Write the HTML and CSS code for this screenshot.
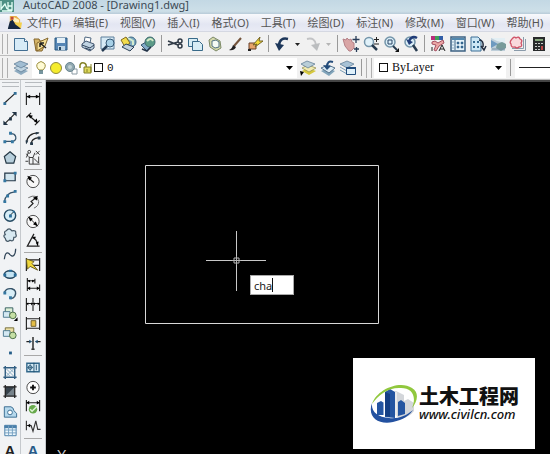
FILE: index.html
```html
<!DOCTYPE html>
<html lang="zh-CN">
<head>
<meta charset="utf-8">
<title>AutoCAD 2008 - [Drawing1.dwg]</title>
<link rel="stylesheet" href="styles.css">
</head>
<body>
<header class="titlebar">
  <svg class="app-icon" viewBox="0 0 14 14"><path d="M0 0h14v12H0z" fill="#4d9084"/><path d="M1 1v9M1 9l4-5 2 5M8 2v8h4V2M8 6h4M2 11h10" fill="none" stroke="#e4fff6" stroke-width="1.300"/></svg>
  <h1>AutoCAD 2008 - [Drawing1.dwg]</h1>
</header>
<nav class="menubar">
  <svg class="doc-icon" viewBox="0 0 16 16"><path d="M3 1h7l4 4v5H3z" fill="#e9b04a"/><path d="M7 2l6 3v5L6 6z" fill="#fff0bd"/><path d="M5 8h11l-1 6H3z" fill="#f4d04e"/><path d="M1 14l2-7 3-2 3 5 4 3 2 2H1z" fill="#172842"/><path d="M4 2h3v3H4z" fill="#c44938"/></svg>
  <a href="#file">文件(F)</a><a href="#edit">编辑(E)</a><a href="#view">视图(V)</a><a href="#insert">插入(I)</a><a href="#format">格式(O)</a><a href="#tools">工具(T)</a><a href="#draw">绘图(D)</a><a href="#dim">标注(N)</a><a href="#modify">修改(M)</a><a href="#window">窗口(W)</a><a href="#help">帮助(H)</a>
</nav>
<div class="toolbar standard">
  <i class="grip"></i>
  <button aria-label="新建"><svg viewBox="0 0 18 18"><path d="M2.500 3.500h10l3 3v9h-13z" fill="#d7ebf7" stroke="#426e92"/><path d="M12.500 3.500v3h3" fill="#fff" stroke="#426e92"/></svg></button>
  <button aria-label="打开"><svg viewBox="0 0 18 18"><path d="M2 4h5l1 2h5v3l-3 7H4z" fill="#d6b567" stroke="#83652d"/><path d="M5 8l11-5-3 8-8 5z" fill="#f5df96" stroke="#83652d"/><path d="M8 8l6 5M8 8v4M8 8h4" stroke="#222" stroke-width="1.500" fill="none"/></svg></button>
  <button aria-label="保存"><svg viewBox="0 0 18 18"><path d="M3 3h12v12H3z" fill="#5686b5" stroke="#285880"/><path d="M5 3h8v5H5z" fill="#e4f0f7"/><path d="M6 11h7v4H6z" fill="#bfd5e5"/><path d="M7 12h2v3H7z" fill="#254662"/></svg></button>
  <i class="sep"></i>
  <button aria-label="打印"><svg viewBox="0 0 18 18"><path d="M5 8l1-6 6 1-1 5" fill="#fff" stroke="#506882"/><path d="M3 9l4-3 8 3v4l-4 3-8-4z" fill="#c0d3e2" stroke="#435771"/><path d="M3 10l8 3 4-3M6 13l6 2" fill="none" stroke="#30435b"/></svg></button>
  <button aria-label="打印预览"><svg viewBox="0 0 18 18"><path d="M2 2h13v12H2z" fill="#d6eaf5" stroke="#5d7f9b"/><path d="M9 10l-6 6" stroke="#243b53" stroke-width="2.500"/><circle cx="11" cy="8" r="4" fill="#a7d0e6" stroke="#335673"/></svg></button>
  <button aria-label="发布"><svg viewBox="0 0 18 18"><circle cx="12" cy="7" r="5" fill="#7da9c1" stroke="#3c6983"/><path d="M9 3l5 3v4" fill="none" stroke="#d5edce" stroke-width="2"/><path d="M2 5l5-3 4 6-5 4z" fill="#f2dc4c" stroke="#826b20"/><path d="M3 12l4-3 8 3-4 4z" fill="#c1d1de" stroke="#2c4258"/></svg></button>
  <button aria-label="三维输出"><svg viewBox="0 0 18 18"><path d="M2 10l5-3 5 4-4 5z" fill="#81a9c7" stroke="#36536c"/><circle cx="11" cy="7" r="5" fill="#5c9b87" stroke="#3f6b70"/><path d="M8 6q4-4 6 0" stroke="#d6ebc8" stroke-width="2" fill="none"/><path d="M3 14l5 2 4-4" stroke="#223246" stroke-width="1.500" fill="none"/></svg></button>
  <i class="sep"></i>
  <button aria-label="剪切"><svg viewBox="0 0 18 18"><path d="M2 6l10 4M2 10l10-3" stroke="#303a46" stroke-width="1.500"/><circle cx="14" cy="6" r="2" fill="none" stroke="#303a46" stroke-width="1.500"/><circle cx="14" cy="11" r="2" fill="none" stroke="#303a46" stroke-width="1.500"/></svg></button>
  <button aria-label="复制"><svg viewBox="0 0 18 18"><path d="M2.500 3.500h9v8h-9z" fill="#d7edf5" stroke="#386a89"/><path d="M6.500 6.500h7l3 3v6h-10z" fill="#d7edf5" stroke="#386a89"/></svg></button>
  <button aria-label="粘贴"><svg viewBox="0 0 18 18"><path d="M3 5l4-3 7 4 1 7-5 3-6-4z" fill="#d4d8aa" stroke="#7d8a68"/><path d="M6 6l4-1 3 2v5l-4 1-3-2z" fill="#f5fbf5" stroke="#547383"/></svg></button>
  <button aria-label="特性匹配"><svg viewBox="0 0 18 18"><path d="M15 3l-7 8" stroke="#74543c" stroke-width="2"/><path d="M3 15q3-1 4-5l3 2q-2 4-7 3" fill="#211f20"/></svg></button>
  <button aria-label="块编辑器"><svg viewBox="0 0 18 18"><path d="M3 8h7v6H3z" fill="#e7a36b" stroke="#69402d"/><path d="M7 10l7-8-1 4h4l-8 6 2-3z" fill="#f4dc37" stroke="#756527"/><path d="M2 14h3v2H2z" fill="#222"/></svg></button>
  <i class="sep"></i>
  <button aria-label="放弃"><svg viewBox="0 0 18 18"><path d="M15 4Q7 2 6 10" fill="none" stroke="#1d375a" stroke-width="2.500"/><path d="M2 8l9 2-5 6z" fill="#1d375a"/></svg></button>
  <button class="drop" aria-label="放弃列表"><svg viewBox="0 0 9 18"><path d="M2 8h5l-2.500 3z" fill="#222"/></svg></button>
  <button aria-label="重做"><svg viewBox="0 0 18 18"><path d="M3 4Q11 2 12 10" fill="none" stroke="#c2c3c5" stroke-width="2"/><path d="M7 10l9-2-3 8z" fill="#bbbdbf"/></svg></button>
  <button class="drop" aria-label="重做列表"><svg viewBox="0 0 9 18"><path d="M2 8h5l-2.500 3z" fill="#b5b5b5"/></svg></button>
  <i class="sep"></i>
  <button aria-label="平移"><svg viewBox="0 0 18 18"><path d="M1 4l3 1 1-2 2 2 2-1 1 3 2 1v5l-3 3H7L3 11z" fill="#d9a5a5" stroke="#b58086"/><path d="M14 1v7M10.500 4.500h7M12 14h5M14.500 12v5" stroke="#283c57" stroke-width="1.300"/></svg></button>
  <button aria-label="实时缩放"><svg viewBox="0 0 18 18"><circle cx="7" cy="7" r="4.500" fill="#e1f2fa" stroke="#7495aa" stroke-width="1.500"/><path d="M10 10l5 5" stroke="#283c50" stroke-width="2.500"/><path d="M14.500 2v5M12 4.500h5M12 9h5" stroke="#222"/></svg></button>
  <button aria-label="窗口缩放"><svg viewBox="0 0 18 18"><circle cx="8" cy="7" r="5" fill="#dceff8" stroke="#7495aa" stroke-width="1.500"/><path d="M6 5h4v4H6z" fill="none" stroke="#284567"/><path d="M11 11l4 4" stroke="#283c50" stroke-width="2"/><path d="M17 13v4h-4z" fill="#111"/></svg></button>
  <button aria-label="缩放上一个"><svg viewBox="0 0 18 18"><circle cx="8" cy="7" r="5" fill="#dceff8" stroke="#7495aa" stroke-width="1.500"/><path d="M11 10l4 6" stroke="#283c50" stroke-width="2.500"/><path d="M15 3Q10 0 7 6" stroke="#213d78" stroke-width="2.500" fill="none"/><path d="M4 4l7 3-4 3z" fill="#213d78"/></svg></button>
  <i class="sep"></i>
  <button aria-label="特性"><svg viewBox="0 0 18 18"><path d="M2 1h4v4H2z" fill="#b92b7b"/><path d="M6 1h4v4H6z" fill="#3e9f58"/><path d="M10 1h4v4h-4z" fill="#315ea7"/><path d="M3 7l3-1 3 2 5-3 1 3-5 3-3 5-2-1 2-5-4-1z" fill="#eca6a4" stroke="#a45062"/><path d="M10 16l3-6 3 6M11 14h4M3 12v4" stroke="#222" fill="none"/></svg></button>
  <button aria-label="设计中心"><svg viewBox="0 0 18 18"><path d="M2 2h14v14H2z" fill="#e5f3fa" stroke="#3d6283" stroke-width="1.500"/><path d="M3 4h12" stroke="#5389af" stroke-width="2"/><path d="M6 5v10" stroke="#3d6283"/><path d="M8 7h2v2H8zM12 7h2v2h-2zM8 11h2v2H8zM12 11h2v2h-2zM3 7h2M3 10h2M3 13h2" fill="#35678f" stroke="#35678f" stroke-width=".5"/></svg></button>
  <button aria-label="工具选项板"><svg viewBox="0 0 18 18"><path d="M2 2h7l3 3v11H2z" fill="#cce7f5" stroke="#3d6f96"/><path d="M4 6h2v2H4zM8 6h2v2H8zM4 11h2v2H4zM8 11h2v2H8z" fill="#356b91"/><path d="M10 5q5 0 4 7M12 11l3 4 2-4" fill="none" stroke="#212c3e" stroke-width="1.500"/></svg></button>
  <button aria-label="图纸集"><svg viewBox="0 0 18 18"><path d="M2 3h14v13H2z" fill="#bfcfda"/><path d="M2 3h14v5L8 6z" fill="#e3eff4"/><path d="M2 5l7 4-7 4z" fill="#6e9ac0"/><path d="M8 9l5-2 4 2v4l-5 3-5-3z" fill="#789b9a"/><path d="M3 14h13" stroke="#7890a2"/></svg></button>
  <button aria-label="标记集"><svg viewBox="0 0 18 18"><path d="M5 15.500h11.500V4M3 13.500h11.500V2" stroke="#8a9baa" fill="none"/><path d="M3 4q2-3 4-1 3-2 4 1 3 1 1 4 2 4-2 4-2 2-4 0-4 1-4-3-2-2 1-5z" fill="#f9d9dc" stroke="#cf5367" stroke-width="1.300"/></svg></button>
  <button aria-label="计算器"><svg viewBox="0 0 18 18"><path d="M4 2h12v14H4z" fill="#282a2b"/><path d="M6 4h8v2H6z" fill="#88a87e"/><path d="M6 8h2v1H6zM9 8h2v1H9zM12 8h2v1h-2zM6 11h2v1H6zM9 11h2v1H9zM6 14h2v1H6zM9 14h2v1H9z" fill="#c8cbcb"/><path d="M12 11h2v4h-2z" fill="#b84544"/></svg></button>
</div>
<div class="toolbar layers">
  <i class="grip"></i>
  <button aria-label="图层特性"><svg viewBox="0 0 18 18"><path d="M2 12l6-3 8 3-7 4z" fill="#8eabc0"/><path d="M2 9l6-3 8 3-7 4z" fill="#c0d4e1" stroke="#57758f" stroke-width=".7"/><path d="M2 5l6-3 8 3-7 4z" fill="#a1bdd2" stroke="#57758f" stroke-width=".7"/></svg></button>
  <button class="combo layer-combo" aria-label="图层 0">
    <svg viewBox="0 0 14 14"><path d="M5 9Q1 5 4 2q3-3 6 0 3 3-1 7z" fill="#fffbd4" stroke="#9d9040"/><path d="M5 10h4M5 12h4" stroke="#4b7380" stroke-width="1.500"/></svg>
    <svg viewBox="0 0 14 14"><circle cx="7" cy="7" r="5.500" fill="#f5ec2d" stroke="#8f8a3d"/></svg>
    <svg viewBox="0 0 14 14"><path d="M8 8h5v5H8z" fill="#fff" stroke="#8b9aa3"/><circle cx="6" cy="6" r="4.500" fill="#91a8b0" stroke="#688591"/><circle cx="6" cy="6" r="2" fill="#bfd0d4"/></svg>
    <svg viewBox="0 0 14 14"><path d="M1 7V4q1-3 4-2 3 1 2 5" fill="none" stroke="#85832a" stroke-width="1.500"/><path d="M5 6h7v6H5z" fill="#ded95b" stroke="#7f7c2b"/><path d="M12 3v8M8 8v3" stroke="#878326"/></svg>
    <b class="swatch"></b><span>0</span>
    <svg class="caret-down" viewBox="0 0 7 4"><path d="M0 0h7L3.500 4z"/></svg>
  </button>
  <button aria-label="将对象的图层置为当前"><svg viewBox="0 0 18 18"><path d="M3 12l6-3 8 3-7 4z" fill="#d6c83e"/><path d="M3 9l6-3 8 3-7 4z" fill="#f3ebb2" stroke="#8d8b45" stroke-width=".7"/><path d="M2 5l6-3 8 3-7 4z" fill="#b9ced8" stroke="#57758f" stroke-width=".7"/><path d="M1 12l4 1-3 4z"/></svg></button>
  <button aria-label="上一个图层"><svg viewBox="0 0 18 18"><path d="M2 12l7-3 7 3-6 5z" fill="#82a5bb"/><path d="M2 9l7-3 7 3-6 5z" fill="#dcebf4" stroke="#57758f"/><path d="M14 3Q8 1 8 8" fill="none" stroke="#244c7a" stroke-width="2"/><path d="M4 6l8 1-4 4z" fill="#244c7a"/></svg></button>
  <button aria-label="图层状态"><svg viewBox="0 0 18 18"><path d="M1 5l7-3 7 3-7 4z" fill="#a7c2d6" stroke="#57758f" stroke-width=".7"/><path d="M1 8l7 4 3-1M1 11l7 4" fill="none" stroke="#7c9fb8"/><path d="M7.500 8.500h9v7h-9z" fill="#dff0fa" stroke="#214c7c"/><path d="M7 9h10" stroke="#214c7c" stroke-width="2"/></svg></button>
  <i class="sep"></i><i class="grip inner"></i>
  <button class="combo color-combo" aria-label="颜色 ByLayer"><b class="swatch"></b><span>ByLayer</span><svg class="caret-down" viewBox="0 0 7 4"><path d="M0 0h7L3.500 4z"/></svg></button>
  <i class="sep"></i>
  <button class="combo line-combo" aria-label="线型"><b class="line"></b></button>
</div>
<main class="workspace">
  <aside class="tools draw-tools">
    <i class="hgrip"></i>
    <div class="stack">
      <button aria-label="直线"><svg viewBox="0 0 18 18"><path d="M3 14L15 3" stroke="#222" stroke-width="1.200"/><path d="M2 13h3v3H2zM13 2h3v3h-3z" fill="#347199"/></svg></button>
      <button aria-label="构造线"><svg viewBox="0 0 18 18"><path d="M3 15L15 3" stroke="#222" stroke-width="1.200"/><path d="M2 16v-5l5 5zM16 2v5l-5-5zM8 8h3v3H8z" fill="#223445"/></svg></button>
      <button aria-label="多段线"><svg viewBox="0 0 18 18"><path d="M3 13h9q4-1 3-5-1-3-5-3" fill="none" stroke="#37546c" stroke-width="1.300"/><path d="M2 12h3v3H2zM10 12h3v3h-3zM8 3h3v3H8z" fill="#3477a1"/></svg></button>
      <button aria-label="正多边形"><svg viewBox="0 0 18 18"><path d="M9 3l6 5-2 7H5L3 8z" fill="#b7cfdc" stroke="#253845" stroke-width="1.300"/></svg></button>
      <button aria-label="矩形"><svg viewBox="0 0 18 18"><path d="M3.500 5.500h11v8h-11z" fill="#d2e5ee" stroke="#233748" stroke-width="1.300"/><path d="M2 12h3v3H2zM13 4h3v3h-3z" fill="#3477a1"/></svg></button>
      <button aria-label="圆弧"><svg viewBox="0 0 18 18"><path d="M3 15Q4 5 14 4" fill="none" stroke="#36536a" stroke-width="1.300"/><path d="M2 13h3v3H2zM5 7h3v3H5zM13 2h3v3h-3z" fill="#3477a1"/></svg></button>
      <button aria-label="圆"><svg viewBox="0 0 18 18"><circle cx="9" cy="9" r="6" fill="#d6edf7" stroke="#244a63" stroke-width="1.500"/><path d="M9 9l4-4" stroke="#222"/><path d="M8 8h3v3H8zM12 4h2v2h-2z" fill="#2d719d"/></svg></button>
      <button aria-label="修订云线"><svg viewBox="0 0 18 18"><path d="M5 4q3-4 6 0 5-1 4 3 2 4-2 4 0 5-4 3-4 3-5-2-3-3 0-4-2-3 1-4z" fill="#d8e9f1" stroke="#455866" stroke-width="1.300"/></svg></button>
      <button aria-label="样条曲线"><svg viewBox="0 0 18 18"><path d="M3 14q1-9 5-6 3 4 5 2 2-2 2-7" fill="none" stroke="#304558" stroke-width="1.300"/></svg></button>
      <button aria-label="椭圆"><svg viewBox="0 0 18 18"><ellipse cx="9" cy="9" rx="6" ry="4" fill="#c5e4f3" stroke="#24465e" stroke-width="1.500"/><path d="M2 8h3v3H2zM8 4h3v2H8zM13 8h3v3h-3z" fill="#286b98"/></svg></button>
      <button aria-label="椭圆弧"><svg viewBox="0 0 18 18"><path d="M3 8q2-5 8-4 6 2 3 8-2 3-5 2" fill="#d9eef7" stroke="#365369" stroke-width="1.500"/><path d="M2 7h3v3H2zM8 12h3v3H8z" fill="#3477a1"/></svg></button>
      <button aria-label="插入块"><svg viewBox="0 0 18 18"><path d="M4 3h8v7H4z" fill="#dcefd6" stroke="#355f60"/><path d="M2 7h7v6H2z" fill="#d5e9f3" stroke="#4c788f"/><circle cx="12" cy="11" r="3.500" fill="#c5dfa4" stroke="#476a43"/><path d="M17 13v4h-4z"/></svg></button>
      <button aria-label="创建块"><svg viewBox="0 0 18 18"><path d="M4 3h9v7H4z" fill="#ebdfa3" stroke="#746b37"/><path d="M2 6h7v6H2z" fill="#d5e9f3" stroke="#4c788f"/><circle cx="12" cy="11" r="3.500" fill="#c5dfa4" stroke="#476a43"/></svg></button>
      <button aria-label="点"><svg viewBox="0 0 18 18"><path d="M8 8h3v3H8z" fill="#245d88"/></svg></button>
      <button aria-label="图案填充"><svg viewBox="0 0 18 18"><path d="M4 2v14M14 2v14M2 4h14M2 14h14" stroke="#315e82" stroke-width="1.500"/><path d="M5 5l8 8M9 5l4 4M5 9l4 4M13 5l-8 8" stroke="#87abc4"/></svg></button>
      <button aria-label="渐变色"><svg viewBox="0 0 18 18"><path d="M4 4h10v10H4z" fill="#77838b"/><path d="M4 4h10L4 14z" fill="#37434c"/><path d="M4 2v14M14 2v14M2 4h14M2 14h14" stroke="#222" stroke-width="1.300"/></svg></button>
      <button aria-label="面域"><svg viewBox="0 0 18 18"><path d="M3 15V4h7q3 1 3 4l3 3v4z" fill="#b5d8ec" stroke="#376a8f"/><circle cx="9" cy="10" r="2.500" fill="#fff" stroke="#376a8f"/></svg></button>
      <button aria-label="表格"><svg viewBox="0 0 18 18"><path d="M3.500 3.500h12v11h-12z" fill="#edf8fd" stroke="#4a7fa9"/><path d="M3 5h13" stroke="#4a7fa9" stroke-width="3"/><path d="M7.500 4v11M11.500 4v11M3 8.500h13M3 11.500h13" stroke="#76a0c1"/></svg></button>
      <button aria-label="多行文字"><span class="letter">A</span></button>
    </div>
  </aside>
  <aside class="tools dim-tools">
    <i class="hgrip"></i>
    <div class="stack">
      <button aria-label="线性标注"><svg viewBox="0 0 18 18"><path d="M2 3v13M16 3v13M2 7h14" stroke="#222" stroke-width="1.200"/><path d="M2 7l4-2v4zM16 7l-4-2v4z"/></svg></button>
      <button aria-label="对齐标注"><svg viewBox="0 0 18 18"><path d="M2 8l5-5M11 16l5-5M5 6l8 7" stroke="#222" stroke-width="1.300"/><path d="M4 5l5 1-3 3zM14 14l-1-5-3 3z"/></svg></button>
      <button aria-label="弧长标注"><svg viewBox="0 0 18 18"><path d="M2 14Q3 3 15 3M7 15q0-6 8-7" fill="none" stroke="#222" stroke-width="1.300"/><path d="M2 15l-1-4h3zM16 3l-4-1v3zM6 13h3v3H6zM14 7h3v3h-3z" fill="#283c4c"/></svg></button>
      <button aria-label="坐标标注"><svg viewBox="0 0 18 18"><path d="M5 8v8h11M5 9h4l2-5M9 9v7M10 10l5 5V8M2 5l2 3M4 4L2 9M12 2l4 4M16 2l-4 4M1 13h3" fill="none" stroke="#333"/><circle cx="5" cy="3" r="1.500" fill="none" stroke="#333"/></svg></button>
      <i></i>
      <button aria-label="半径标注"><svg viewBox="0 0 18 18"><circle cx="9" cy="9" r="6.500" fill="#f8f8f8" stroke="#444"/><path d="M10 10L4 5" stroke="#222" stroke-width="1.300"/><path d="M3 3l5 2-3 3z"/></svg></button>
      <button aria-label="折弯标注"><svg viewBox="0 0 18 18"><path d="M4 5q9-5 11 4 0 5-5 7" fill="none" stroke="#666"/><path d="M4 16l5-5-2-2 5-4" fill="none" stroke="#222" stroke-width="1.300"/><path d="M14 3l-1 5-4-3z"/></svg></button>
      <button aria-label="直径标注"><svg viewBox="0 0 18 18"><circle cx="9" cy="9" r="6.500" fill="#f8f8f8" stroke="#444"/><path d="M4 4l10 10" stroke="#222"/><path d="M4 4l5 2-3 3zM14 14l-5-2 3-3z"/></svg></button>
      <button aria-label="角度标注"><svg viewBox="0 0 18 18"><path d="M10 2L3 15h13M8 6q5 1 6 8" fill="none" stroke="#222" stroke-width="1.300"/><path d="M8 5l4 0-1 3zM14 15l-2-4 3-1z"/></svg></button>
      <i></i>
      <button aria-label="快速标注"><svg viewBox="0 0 18 18"><path d="M2 2v14M16 2v14M2 4h14M9 10h7" stroke="#222" stroke-width="1.300"/><path d="M2 3l8 3-2 2 6 7-8-4-3 3z" fill="#f0d83c" stroke="#655a21"/></svg></button>
      <button aria-label="基线标注"><svg viewBox="0 0 18 18"><path d="M3 2v14M11 3v5M16 9v7M3 5h8M3 13h13" stroke="#222" stroke-width="1.200"/><path d="M3 5l3-1v3zM11 5L8 4v3zM3 13l3-2v4zM16 13l-3-2v4z"/></svg></button>
      <button aria-label="连续标注"><svg viewBox="0 0 18 18"><path d="M2 2v14M9 2v14M16 2v14M2 8h14" stroke="#222" stroke-width="1.200"/><path d="M2 8l2-1v3zM9 8L7 7v3zM9 8l2-1v3zM16 8l-2-1v3z"/></svg></button>
      <button aria-label="公差"><svg viewBox="0 0 18 18"><path d="M2 2v14M16 2v14M2 4h14M2 14h14" stroke="#222" stroke-width="1.200"/><path d="M7 6h5v6H7z" fill="#e3bd46" stroke="#705d29"/></svg></button>
      <button aria-label="标注间距"><svg viewBox="0 0 18 18"><path d="M9 2v14M2 7h4M12 7h5" stroke="#222" stroke-width="1.500"/><path d="M8 7L5 5v4zM11 7l3-2v4z" fill="#245374"/><path d="M7 15h4" stroke="#222"/></svg></button>
      <i></i>
      <button aria-label="形位公差"><svg viewBox="0 0 18 18"><path d="M2.500 4.500h13v9h-13z" fill="#d7ebf5" stroke="#316789" stroke-width="1.500"/><path d="M10 4v10M12.500 6v6" stroke="#205071"/><circle cx="6" cy="9" r="2" fill="none" stroke="#205071"/><path d="M6 5v8M3 9h6" stroke="#205071" stroke-width=".7"/></svg></button>
      <button aria-label="圆心标记"><svg viewBox="0 0 18 18"><circle cx="9" cy="9" r="6.500" fill="#fff" stroke="#444"/><path d="M9 6v6M6 9h6" stroke="#111" stroke-width="2"/></svg></button>
      <button aria-label="检验"><svg viewBox="0 0 18 18"><path d="M2 2v12M16 2v12M2 5h14" stroke="#222" stroke-width="1.200"/><path d="M2 5l3-2v4zM16 5l-3-2v4z"/><circle cx="9" cy="12" r="4.500" fill="#67a94c"/><path d="M6 12l2 2 5-5" stroke="#e0f5d7" stroke-width="1.500" fill="none"/></svg></button>
      <button aria-label="折弯线性"><svg viewBox="0 0 18 18"><path d="M2 3v10M2 8h5l2 6 3-11 2 9h3" fill="none" stroke="#333" stroke-width="1.200"/><path d="M3 8l3-2v4z"/></svg></button>
      <i></i>
      <button aria-label="标注样式"><span class="letter blue">A</span></button>
    </div>
  </aside>
  <section class="canvas">
    <svg class="drawing" width="504" height="372" viewBox="0 0 504 372"><path d="M99.500 83.500h233v158h-233z" fill="none" stroke="#d8d8d8"/><path d="M190.500 149v27M190.500 182v27M160 178.500h27M194 178.500h26" stroke="#c8c8c8"/><path d="M188 176h5v5h-5zM190.500 174v9M186 178.500h9" fill="none" stroke="#b5b5b5"/></svg>
    <label class="command"><input type="text" value="cha" aria-label="命令输入"><i></i></label>
    <span class="axis">Y</span>
    <div class="brand">
      <svg viewBox="0 0 50 42"><path d="M24 30V9l3-1 8 4v6l4-2 6 4v8q-4 6-14 8z" fill="#d3d6da"/><path d="M8 32V20l4-2 3 2v12zM16 34V9l5-3 5 3v26zM29 33V19l3-2 4 3v11z" fill="#2455a1"/><path d="M16 9l5 2v23l-5-1z" fill="#143f84"/><path d="M15 20v13M27 9v25" stroke="#fff"/><path d="M3 21C8 6 31-3 43 5c8 5 5 14 0 20C48 13 43 5 32 5 20 4 9 12 3 21z" fill="#91c83e"/><path d="M3 20c-5 14 6 22 21 19 10-2 17-7 20-12-7 6-15 9-24 8C9 34 2 29 3 20z" fill="#2351a0"/></svg>
      <div class="brand-text"><strong>土木工程网</strong><em>www.civilcn.com</em></div>
    </div>
  </section>
</main>
</body>
</html>
```
FILE: styles.css
```css
* { box-sizing: border-box; }
body {
  margin: 0;
  height: 100vh;
  display: flex;
  flex-direction: column;
  overflow: hidden;
  background: #f0f0f0;
  font-family: "Noto Sans", "Noto Sans CJK SC", sans-serif;
  color: #222;
}
button { flex: none; padding: 0; border: 0; background: none; font: inherit; color: inherit; }
svg { display: block; flex: none; }

.titlebar {
  flex: none;
  height: 14px;
  display: flex;
  align-items: flex-end;
  gap: 9px;
  padding-bottom: 2px;
  overflow: hidden;
  background: linear-gradient(#c3d8e4, #cddfe8 80%, #b8cbd8);
}
.app-icon { width: 14px; height: 14px; margin-bottom: -2px; }
.titlebar h1 { margin: 0; font-size: 11px; line-height: 15px; font-weight: 400; color: #3c4a55; white-space: nowrap; }

.menubar {
  flex: none;
  height: 18px;
  display: flex;
  align-items: center;
  gap: 12px;
  padding-left: 7px;
  overflow: hidden;
  background: linear-gradient(#f8f9fc, #e3e6f2 60%, #e9ebf5);
  border-bottom: 1px solid #d5d8e2;
}
.doc-icon { width: 15px; height: 15px; margin-right: -7px; }
.menubar a { flex: none; font-size: 11px; line-height: 16px; color: #555; text-decoration: none; white-space: nowrap; }

.toolbar {
  flex: none;
  height: 24px;
  display: flex;
  align-items: center;
  gap: 2px;
  padding-left: 2px;
  overflow: hidden;
  background: #f1f1f1;
  border-bottom: 1px solid #bcbcbc;
}
.toolbar button, .toolbar > button > svg { width: 18px; height: 18px; }
.toolbar .drop, .toolbar .drop > svg { width: 9px; }
.grip { flex: none; width: 6px; height: 20px; margin-right: 2px; border: solid #b0b0b0; border-width: 0 1px; }
.grip.inner { margin: 0; }
.sep { flex: none; width: 1px; height: 17px; margin: 0 2px; background: #999; }
.toolbar .combo { display: flex; align-items: center; height: 20px; background: #fff; color: #111; }
.toolbar .combo > svg { width: 14px; height: 14px; }
.toolbar .combo > .caret-down { width: 7px; height: 4px; margin-left: auto; }
.swatch { flex: none; width: 9px; height: 9px; border: 1px solid #111; }
.toolbar .layer-combo { width: 265px; gap: 1px; padding: 0 4px 0 2px; font: 11px "Liberation Mono", monospace; }
.layer-combo span { margin-left: 3px; }
.toolbar .color-combo { width: 132px; gap: 4px; padding: 0 4px 0 5px; font: 12px "Liberation Serif", serif; }
.toolbar .line-combo { flex: 1; padding-left: 4px; }
.line { width: 100%; height: 1px; background: #222; }

.workspace { flex: 1; min-height: 0; display: flex; }
.tools { flex: none; display: flex; flex-direction: column; align-items: center; background: #f1f3f5; border-right: 1px solid #c5c9cd; }
.draw-tools { width: 21px; }
.dim-tools { width: 25px; }
.hgrip { width: 17px; height: 5px; margin: 2px 0 3px; border: solid #b7bbbf; border-width: 1px 0; }
.stack { flex: 1; min-height: 0; display: flex; flex-direction: column; align-items: center; justify-content: space-between; margin-bottom: -5px; }
.stack button { width: 18px; height: 17px; }
.stack svg { width: 18px; height: 17px; }
.stack > i { width: 18px; height: 1px; background: #a8a8a8; }
.letter { display: block; font: bold 15px/15px "Liberation Sans", sans-serif; }
.letter.blue { color: #285b89; }

.canvas { position: relative; flex: 1; overflow: hidden; background: #000; border-top: 2px solid #444; }
.drawing { position: absolute; left: 0; top: 0; }
.command { position: absolute; left: 204px; top: 193px; }
.command input { display: block; width: 44px; height: 20px; padding: 0 3px; border: 1px solid #aaa; background: #fff; color: #222; font: 11px "Noto Sans", sans-serif; }
.command i { position: absolute; left: 22px; top: 3px; width: 1px; height: 14px; background: #111; }
.axis { position: absolute; left: 11px; top: 365px; font: 14px/16px "Liberation Sans", sans-serif; color: #ccc; }
.brand {
  position: absolute;
  right: 15px;
  bottom: 5px;
  display: flex;
  align-items: center;
  justify-content: center;
  width: 182px;
  height: 91px;
  background: #fff;
  color: #111;
}
.brand svg { width: 50px; height: 42px; }
.brand-text { display: flex; flex-direction: column; white-space: nowrap; }
.brand strong { font: 900 20px/20px "Noto Sans CJK SC", sans-serif; }
.brand em { font: italic 500 13px/16px "Noto Sans", sans-serif; }
```
